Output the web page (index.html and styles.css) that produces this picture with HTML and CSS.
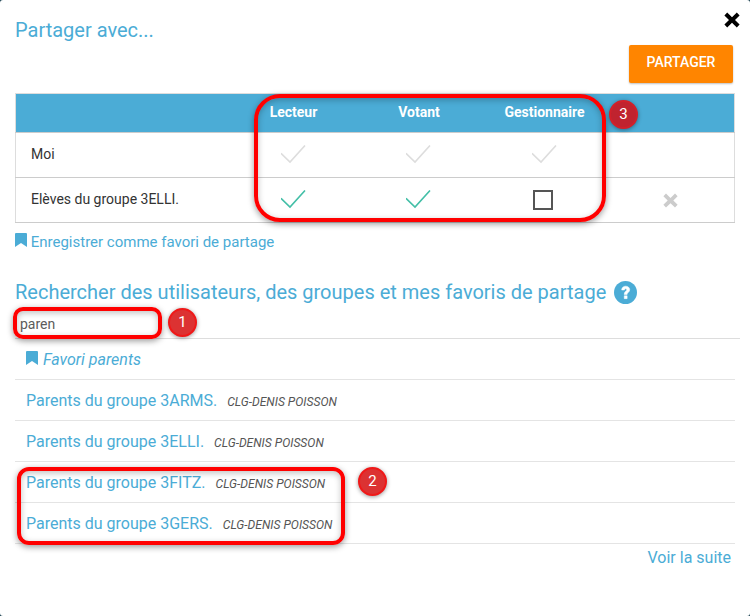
FILE: index.html
```html
<!DOCTYPE html>
<html lang="fr">
<head>
  <meta charset="UTF-8" />
  <title>Partager avec...</title>
  <link rel="stylesheet" href="styles.css">
</head>
<body>

  <div class="modal">
    <button class="close" aria-label="Fermer">
      <svg width="16" height="16" viewBox="0 0 16 16"><path d="M3.2 .6 8 5.2 12.8 .6 15.6 3.4 11 8 15.6 12.6 12.8 15.4 8 10.8 3.2 15.4 .4 12.6 5 8 .4 3.4z"/></svg>
    </button>

    <h2 class="title">Partager avec...</h2>
    <div class="actions">
      <button class="share-btn">PARTAGER</button>
    </div>

    <table class="rights">
      <thead>
        <tr>
          <th></th>
          <th>Lecteur</th>
          <th>Votant</th>
          <th>Gestionnaire</th>
          <th></th>
        </tr>
      </thead>
      <tbody>
        <tr>
          <td>Moi</td>
          <td><svg class="check off" viewBox="0 0 26 20"><path d="M0 8.300 9 17 24 .5"/></svg></td>
          <td><svg class="check off" viewBox="0 0 26 20"><path d="M0 8.300 9 17 24 .5"/></svg></td>
          <td><svg class="check off" viewBox="0 0 26 20"><path d="M0 8.300 9 17 24 .5"/></svg></td>
          <td></td>
        </tr>
        <tr>
          <td>Elèves du groupe 3ELLI.</td>
          <td><svg class="check" viewBox="0 0 26 20"><path d="M0 8.300 9 17 24 .5"/></svg></td>
          <td><svg class="check" viewBox="0 0 26 20"><path d="M0 8.300 9 17 24 .5"/></svg></td>
          <td><span class="box"></span></td>
          <td>
            <svg class="remove" width="15" height="15" viewBox="0 0 16 16"><path d="M3.2 .6 8 5.2 12.8 .6 15.6 3.4 11 8 15.6 12.6 12.8 15.4 8 10.8 3.2 15.4 .4 12.6 5 8 .4 3.4z"/></svg>
          </td>
        </tr>
      </tbody>
    </table>

    <a class="fav-link">
      <svg class="bookmark" viewBox="0 0 12 14"><path d="M1 0H11Q12 0 12 1V14L6 10 0 14V1Q0 0 1 0z"/></svg>
      Enregistrer comme favori de partage
    </a>

    <h2 class="search-title">
      Rechercher des utilisateurs, des groupes et mes favoris de partage
      <svg class="help" width="23" height="23" viewBox="0 0 24 24">
        <circle cx="12" cy="12" r="12"/>
        <path d="M8 9.400C8 6.900 9.800 5.400 12.200 5.400 14.600 5.400 16.400 6.900 16.400 9.100 16.400 11.800 13.700 12 13.700 14.100H10.700C10.700 10.800 13.300 10.800 13.300 9.200 13.300 8.400 12.800 8 12.100 8 11.300 8 10.900 8.500 10.900 9.400z M10.700 15.400H13.700V18.400H10.700z" fill="#fff" stroke="#fff" stroke-width=".5"/>
      </svg>
    </h2>

    <input class="search" type="text" value="paren">

    <ul class="results">
      <li class="fav">
        <svg class="bookmark" viewBox="0 0 12 14"><path d="M1 0H11Q12 0 12 1V14L6 10 0 14V1Q0 0 1 0z"/></svg>
        <em>Favori parents</em>
      </li>
      <li>Parents du groupe 3ARMS. <em class="school">CLG-DENIS POISSON</em></li>
      <li>Parents du groupe 3ELLI. <em class="school">CLG-DENIS POISSON</em></li>
      <li>Parents du groupe 3FITZ. <em class="school">CLG-DENIS POISSON</em></li>
      <li>Parents du groupe 3GERS. <em class="school">CLG-DENIS POISSON</em></li>
    </ul>
    <div class="more"><a>Voir la suite</a></div>

    <!-- annotations on top of the screenshot -->
    <div class="mark mark-1"></div>
    <div class="mark mark-2"></div>
    <div class="mark mark-3"></div>
    <div class="num num-1">1</div>
    <div class="num num-2">2</div>
    <div class="num num-3">3</div>
  </div>

</body>
</html>
```

FILE: styles.css
```css
* {
  box-sizing: border-box;
}
html, body {
  margin: 0;
  padding: 0;
  background-color: #1d4352;
  font-family: Roboto, sans-serif;
  color: #333;
}
.modal {
  position: relative;
  width: 750px;
  height: 616px;
  padding: 15px 15px 0;
  overflow: hidden;
  background-color: #fff;
  border-radius: 3px;
}
.close {
  position: absolute;
  top: 12px;
  right: 10px;
  padding: 0;
  border: none;
  background: none;
  line-height: 0;
}
.title {
  margin: 0;
  height: 30px;
  font-size: 20px;
  line-height: 30px;
  font-weight: 400;
  color: #4bacd6;
}
.actions {
  display: flex;
  justify-content: flex-end;
  height: 48px;
  padding-right: 2px;
}
.share-btn {
  width: 104px;
  height: 38px;
  border: none;
  border-radius: 2px;
  background-color: #ff8500;
  color: #fff;
  font-family: inherit;
  font-size: 14px;
  font-weight: 500;
  padding: 0 0 4px;
  box-shadow: 0 1px 2px rgba(0, 0, 0, .25);
}
.rights {
  width: 720px;
  height: 130px;
  table-layout: fixed;
  border-collapse: collapse;
  border: 1px solid #ddd;
  font-size: 14px;
}
.rights th {
  width: 126px;
  height: 39px;
  padding: 0 0 2px;
  background-color: #4bacd6;
  color: #fff;
  font-size: 14px;
  font-weight: 700;
  border-bottom: 1px solid #ccc;
}
.rights th:first-child {
  width: 215px;
}
.rights th:nth-child(3) {
  width: 125px;
}
.rights th:last-child {
  width: auto;
}
.rights td {
  height: 45px;
  text-align: center;
  border-bottom: 1px solid #ccc;
  color: #333;
}
.rights td:first-child {
  text-align: left;
  padding: 0 0 2px 15px;
}
.check {
  display: block;
  width: 26px;
  height: 20px;
  margin: 0 auto;
  fill: none;
  stroke: #43bfa7;
  stroke-width: 1.6;
}
.check.off {
  stroke: #ddd;
}
.box {
  display: block;
  width: 20px;
  height: 20px;
  margin: 0 auto;
  position: relative;
  left: -2px;
  border: 2px solid #555;
}
.remove {
  display: block;
  margin: 0 auto;
  fill: #ccc;
}
.bookmark {
  width: 12px;
  height: 14px;
  fill: #4bacd6;
}
.fav-link {
  display: block;
  margin-top: 9px;
  height: 20px;
  font-size: 15px;
  line-height: 20px;
  color: #4bacd6;
}
.search-title {
  display: flex;
  align-items: center;
  gap: 8px;
  margin: 25px 0 0;
  height: 30px;
  font-size: 20px;
  font-weight: 400;
  color: #4bacd6;
}
.help {
  fill: #4bacd6;
}
.search {
  display: block;
  width: 725px;
  height: 32px;
  padding: 3px 5px 0;
  border: none;
  border-bottom: 1px solid #ddd;
  outline: none;
  font-family: inherit;
  font-size: 14px;
  color: #5c5c5c;
}
.results {
  margin: 0;
  padding: 0;
  list-style: none;
  width: 720px;
}
.results li {
  height: 41px;
  padding: 0 11px;
  line-height: 41px;
  font-size: 16px;
  color: #4bacd6;
  border-bottom: 1px solid #e4e4e4;
}
.fav .bookmark {
  margin-right: 1px;
}
.school {
  margin-left: 6px;
  font-size: 12.1px;
  color: #555;
}
.more {
  text-align: right;
  padding: 4px 4px 0 0;
  width: 720px;
  font-size: 16px;
  color: #4bacd6;
}
.mark {
  position: absolute;
  border: 4px solid #f00;
  box-shadow: 0 2px 6px rgba(0, 0, 0, .4), inset 0 2px 6px rgba(0, 0, 0, .25);
}
.mark-1 {
  left: 13px;
  top: 307px;
  width: 149px;
  height: 32px;
  border-radius: 10px;
}
.mark-2 {
  left: 17px;
  top: 467px;
  width: 328px;
  height: 78px;
  border-radius: 12px;
}
.mark-3 {
  left: 254px;
  top: 94px;
  width: 352px;
  height: 128px;
  border-radius: 26px;
}
.num {
  position: absolute;
  width: 29px;
  height: 29px;
  border: 2px solid #f01818;
  border-radius: 50%;
  background-color: #dc3232;
  color: #fff;
  font-size: 15px;
  line-height: 25px;
  text-align: center;
  box-shadow: 0 1px 4px rgba(0, 0, 0, .4);
}
.num-1 {
  left: 168px;
  top: 308px;
}
.num-2 {
  left: 358px;
  top: 467px;
}
.num-3 {
  left: 609px;
  top: 100px;
  background-color: #c0232f;
  border-color: #d2202a;
}
```
